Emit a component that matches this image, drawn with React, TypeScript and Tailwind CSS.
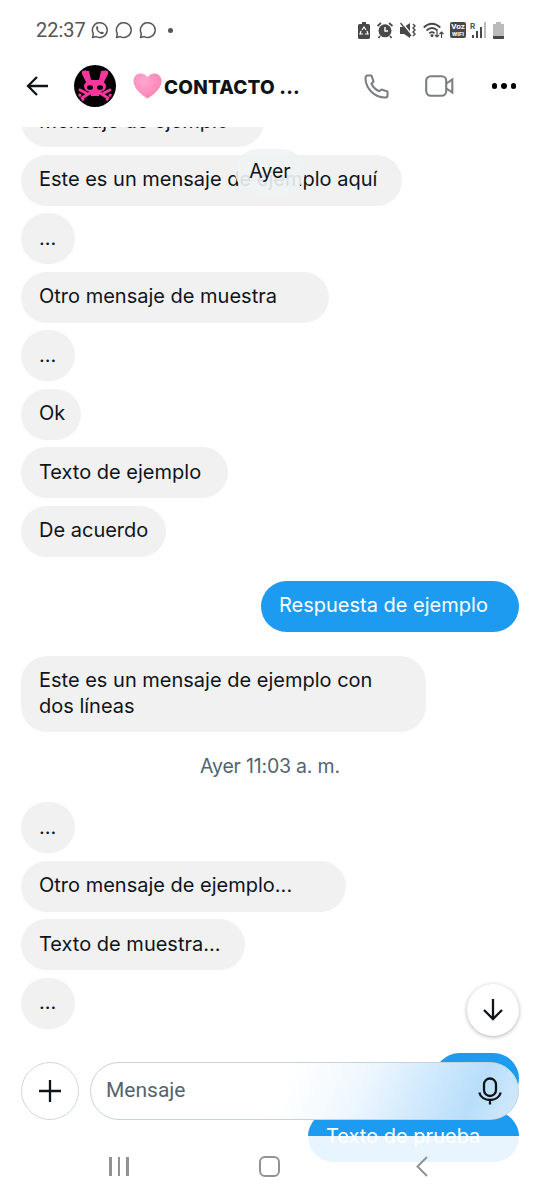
import React from "react";
import clsx from "clsx";

interface IMessage {
	id: number;
	text: string;
	width: string;
	own?: boolean;
	spacing?: string;
}

// neutral sample conversation
const earlier: IMessage[] = [
	{ id: 1, text: "Mensaje de ejemplo", width: "w-[243px]" },
	{ id: 2, text: "Este es un mensaje de ejemplo aquí", width: "w-[381px]" },
	{ id: 3, text: "...", width: "w-[54px]" },
	{ id: 4, text: "Otro mensaje de muestra", width: "w-[308px]" },
	{ id: 5, text: "...", width: "w-[54px]" },
	{ id: 6, text: "Ok", width: "w-[60px]" },
	{ id: 7, text: "Texto de ejemplo", width: "w-[207px]" },
	{ id: 8, text: "De acuerdo", width: "w-[145px]" },
	{ id: 9, text: "Respuesta de ejemplo", width: "w-[258px]", own: true, spacing: "mt-[16.5px]" },
	{ id: 10, text: "Este es un mensaje de ejemplo con dos líneas", width: "w-[405px]", spacing: "mt-[16.5px]" },
];

const later: IMessage[] = [
	{ id: 11, text: "...", width: "w-[54px]" },
	{ id: 12, text: "Otro mensaje de ejemplo...", width: "w-[325px]" },
	{ id: 13, text: "Texto de muestra...", width: "w-[224px]" },
	{ id: 14, text: "...", width: "w-[54px]" },
	{ id: 15, text: "Hola", width: "w-[85px]", own: true, spacing: "mt-[16.5px]" },
	{ id: 16, text: "Texto de prueba", width: "w-[211px]", own: true },
];

const Bubble = ({ text, width, own, spacing }: IMessage) => (
	<li
		className={clsx(
			"shrink-0 min-h-[51px] pl-[18px] pr-[14px] py-[12.75px] rounded-[26px] text-[20px] leading-[25.5px]",
			width,
			spacing,
			own ? "self-end bg-[#1d9bf0] text-white" : "self-start bg-[#f1f1f2] text-[#0f1419]"
		)}
	>
		{text}
	</li>
);

const ChatIcon = ({ phone }: { phone?: boolean }) => (
	<svg width="18" height="18" viewBox="0 0 18 18" fill="none" stroke="#555" strokeWidth="1.5">
		<path d="M1.5 16.5 2.4 12.8A7.4 7.4 0 1 1 5.3 15.6Z" strokeLinejoin="round" />
		{phone && <path d="M6.2 4.8 7.5 7.2 6.8 8.2C7.4 9.6 8.5 10.7 9.9 11.2L10.9 10.5 13 11.7C12.2 14 9.4 13.2 7.5 11.3 5.2 9.2 4.3 6.3 6.2 4.8Z" fill="#555" stroke="none" />}
	</svg>
);

const StatusBar = () => (
	<div className="h-[60px] shrink-0 flex items-center justify-between pl-9 pr-[36px] text-[#555]">
		<div className="flex items-center">
			<span className="w-[55px] text-[20px] font-[Roboto]">22:37</span>
			<div className="flex gap-[6px]">
				<ChatIcon phone />
				<ChatIcon />
				<ChatIcon />
			</div>
			<span className="ml-[11px] w-[5px] h-[5px] rounded-full bg-[#555]" />
		</div>
		<div className="flex items-center">
			<svg width="12" height="17" viewBox="0 0 12 17" fill="#484848">
				<path d="M4 0h4v2h2.5Q12 2 12 3.5v12Q12 17 10.5 17h-9Q0 17 0 15.500v-12Q0 2 1.500 2H4Z" />
				<path d="M4 8 6 5l2 3M9 9l1 3H7M5 12H2l1-3" stroke="#fff" strokeWidth="1.2" fill="none" />
			</svg>
			<svg className="ml-[7px]" width="16" height="17" viewBox="0 0 16 17" fill="#484848">
				<path d="M.5 4 4 1M12 1l3.500 3M3 14l-1.500 2M13 14l1.500 2" stroke="#484848" strokeWidth="1.700" />
				<circle cx="8" cy="8.800" r="6.500" />
				<path d="M8 5v4h3" stroke="#fff" strokeWidth="1.400" fill="none" />
			</svg>
			<svg className="ml-[7px]" width="16" height="17" viewBox="0 0 16 17" fill="#484848">
				<path d="M0 5h4l6-4v15l-6-4H0Z" />
				<path d="M1.500 0 12 13" stroke="#fff" strokeWidth="1.500" />
				<path d="M.5 1 11 14M13 2l2 2-2 2 2 2-2 2 2 2-2 2" stroke="#484848" strokeWidth="1.400" fill="none" />
			</svg>
			<svg className="ml-[7px]" width="21" height="17" viewBox="0 0 21 17" fill="none" stroke="#484848" strokeWidth="1.700">
				<path d="M.7 5.500Q9 -2 17.300 5.500M3.500 8.500Q9 3.500 14.500 8.500M6.300 11.300Q9 9 11.500 11.300" />
				<circle cx="9" cy="13.500" r=".7" />
				<path d="M14 9v6m-2-2 2 2 2-2M18.500 16v-6m-2 2 2-2 2 2" strokeWidth="1.200" />
			</svg>
			<span className="ml-[6px] w-4 h-4 rounded-[2px] bg-[#484848] text-white leading-[7px] font-bold text-center flex flex-col justify-center font-[Roboto]">
				<span className="text-[8px]">Voz</span>
				<span className="text-[6px]">WIFI</span>
			</span>
			<div className="ml-1 flex items-end h-4">
				<span className="self-start text-[8px] leading-[8px] font-bold w-[2px]">R</span>
				<span className="w-[2px] h-[3px] bg-[#484848]" />
				<span className="ml-[2px] w-[2px] h-[7px] bg-[#484848]" />
				<span className="ml-[2px] w-[2px] h-[11px] bg-[#484848]" />
				<span className="ml-[2px] w-[2px] h-4 bg-[#bbb]" />
			</div>
			<svg className="ml-[7px]" width="11" height="17" viewBox="0 0 11 17">
				<path d="M3 0h5v2h3v14q0 1-1 1H1q-1 0-1-1V2h3Z" fill="#bbb" />
				<path d="M0 14h11v2q0 1-1 1H1q-1 0-1-1Z" fill="#484848" />
			</svg>
		</div>
	</div>
);

const Avatar = () => (
	<svg className="ml-[25px]" width="42" height="42" viewBox="0 0 42 42">
		<circle cx="21" cy="21" r="21" fill="#050204" />
		<g fill="#f5369c">
			<path d="M14 21 8 9Q7 5 11 5.500L15 6 17 15h8l2-9 4-.5q4-.5 3 3.500L28 21Z" />
			<path d="M10 21q0-4 6-5h10q6 1 6 5 0 5-6 6l-1 4h-8l-1-4q-6-1-6-6Z" />
		</g>
		<path d="m8 33 8-5M34 33l-8-5M6 25l6 3M36 25l-6 3" stroke="#f5369c" strokeWidth="3" strokeLinecap="round" />
		<path d="m5 29 5 7M37 29l-5 7" stroke="#f5369c" strokeWidth="2.500" strokeDasharray="3 2" />
		<ellipse cx="16" cy="22.500" rx="3" ry="2.300" fill="#050204" />
		<ellipse cx="26" cy="22.500" rx="3" ry="2.300" fill="#050204" />
	</svg>
);

const Header = () => (
	<header className="h-[67px] shrink-0 flex items-center pl-[26px] pr-6 pb-[15px]">
		<svg width="23" height="20" viewBox="0 0 23 20" fill="none" stroke="#0f1419" strokeWidth="2.300">
			<path d="M11 1 2 10l9 9M2 10h20" />
		</svg>
		<Avatar />
		<svg className="ml-[17px]" width="29" height="26" viewBox="0 0 29 26">
			<defs>
				<radialGradient id="heart" cx=".35" cy=".3" r=".8">
					<stop offset="0" stopColor="#ffa6cc" />
					<stop offset="1" stopColor="#fb80b4" />
				</radialGradient>
			</defs>
			<path d="M14.500 25.500C10 23 .5 16 .5 8 .5-.5 11-2 14.500 4.500 18-2 28.500-.5 28.500 8c0 8-9.500 15-14 17.500Z" fill="url(#heart)" />
		</svg>
		<h1 className="ml-[2px] pt-1 w-[200px] text-[19px] font-extrabold tracking-[0.2px] text-[#0f1419]">CONTACTO ...</h1>
		<svg width="25" height="25" viewBox="0 0 25 25" fill="none" stroke="#7c7f82" strokeWidth="2.100" strokeLinejoin="round">
			<path d="M3 1.500H7.500L9.500 7.500 7.500 9.800C9 13 12 16 15.300 17.300L17.500 15.500 23.500 17.500V22Q23.500 23.500 21 23.500C10 23.500 1.500 14 1.500 4Q1.500 2 3 1.500Z" />
		</svg>
		<svg className="ml-[36px]" width="29" height="22" viewBox="0 0 29 22" fill="none" stroke="#7c7f82" strokeWidth="2.100">
			<rect x="1.200" y="1.200" width="20" height="19.600" rx="4.500" />
			<path d="M21.500 8.500 27.300 4.500v13l-5.800-4" />
		</svg>
		<div className="ml-auto flex gap-1">
			<span className="w-[5.500px] h-[5.500px] rounded-full bg-black" />
			<span className="w-[5.500px] h-[5.500px] rounded-full bg-black" />
			<span className="w-[5.500px] h-[5.500px] rounded-full bg-black" />
		</div>
	</header>
);

const Composer = () => (
	<div className="absolute left-[21px] right-[21px] top-[1062px] h-[58px] flex gap-[11px]">
		<button className="w-[58px] h-[58px] shrink-0 rounded-full border border-[#cfd9de] bg-white flex items-center justify-center">
			<svg width="22" height="22" viewBox="0 0 22 22" stroke="#0f1419" strokeWidth="2.300">
				<path d="M11 0v22M0 11h22" />
			</svg>
		</button>
		<div className="flex-1 rounded-full border border-[#c4d3dc] bg-[linear-gradient(115deg,#ffffff_45%,#eef7fe_62%,#d3eafc_75%,#b8defb_88%,#d5eafa_100%)] flex items-center justify-between pl-[15px] pr-[16px]">
			<span className="text-[21px] text-[#536471] font-[Roboto]">Mensaje</span>
			<svg width="24" height="28" viewBox="0 0 24 28" fill="none" stroke="#0f1419" strokeWidth="2.300">
				<rect x="6" y="1.500" width="12" height="17.500" rx="6" />
				<path d="M1.300 15.500C3.500 25.500 20.500 25.500 22.700 15.500M12 23v4.500" />
			</svg>
		</div>
	</div>
);

const NavigationBar = () => (
	<nav className="absolute inset-x-0 top-[1136px] h-[63px] bg-white/90 flex items-start justify-between pl-[109px] pr-[112px] pt-5">
		<div className="flex gap-[6px] pt-[1px]">
			<span className="w-[2.500px] h-[19px] bg-[#929292]" />
			<span className="w-[2.500px] h-[19px] bg-[#929292]" />
			<span className="w-[2.500px] h-[19px] bg-[#929292]" />
		</div>
		<span className="-ml-[5px] w-[21px] h-[21px] rounded-[6px] border-2 border-[#929292]" />
		<svg width="12" height="21" viewBox="0 0 12 21" fill="none" stroke="#929292" strokeWidth="2">
			<path d="m11 1-9.500 9.500L11 20" />
		</svg>
	</nav>
);

export default function App() {
	return (
		<main className="relative w-full h-[1199px] overflow-hidden flex flex-col bg-white font-['Inter','Liberation_Sans',sans-serif]">
			<StatusBar />
			<Header />
			<section className="flex-1 min-h-0 overflow-hidden px-[21px]">
				<ul className="-mt-[31px] flex flex-col gap-[7.500px]">
					{earlier.map((message) => (
						<Bubble key={message.id} {...message} />
					))}
				</ul>
				<p className="h-[70px] flex items-center justify-center text-[19.500px] tracking-[-0.2px] text-[#536471]">Ayer 11:03 a. m.</p>
				<ul className="flex flex-col gap-[7.500px]">
					{later.map((message) => (
						<Bubble key={message.id} {...message} />
					))}
				</ul>
			</section>
			{/* sticky day label */}
			<div className="absolute left-[235px] top-[149px] w-[70px] h-[45px] rounded-full bg-[#f0f3f4]/90 flex items-center justify-center text-[19.500px] text-[#0f1419]">
				Ayer
			</div>
			<button className="absolute left-[467px] top-[984px] w-[52px] h-[52px] rounded-full bg-white shadow-[0_1px_4px_rgba(0,0,0,0.3)] flex items-center justify-center">
				<svg width="20" height="22" viewBox="0 0 20 22" fill="none" stroke="#0f1419" strokeWidth="2.300">
					<path d="M10 0v20M1 11l9 9 9-9" />
				</svg>
			</button>
			<Composer />
			<NavigationBar />
		</main>
	);
}
